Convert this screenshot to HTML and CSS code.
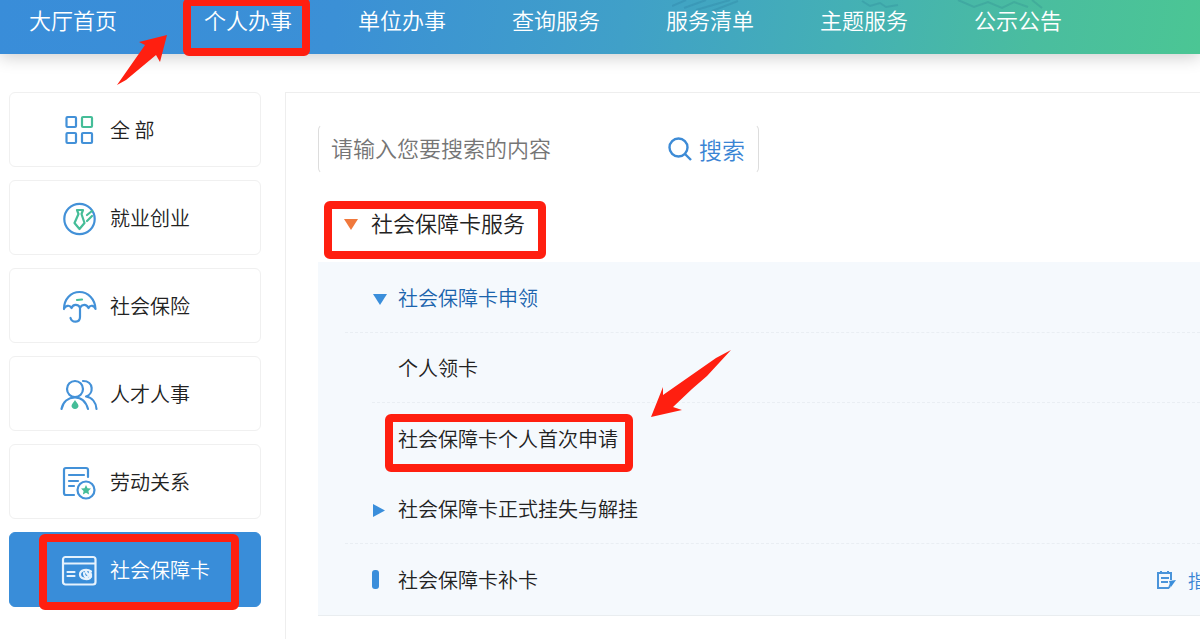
FILE: index.html
```
<!DOCTYPE html>
<html lang="zh-CN">
<head>
  <meta charset="UTF-8">
  <meta name="viewport" content="width=device-width, initial-scale=1.0">
  <title>个人办事 - 社会保障卡</title>
  <link rel="stylesheet" href="styles.css">
</head>
<body>
  <header class="header">
    <svg class="header-art" width="380" height="12" viewBox="0 0 380 12" aria-hidden="true">
      <path d="M0 6l14-6M12 8L34 0M24 10L58 0M40 11L66 1M190 1l8 5 10-3 6 4 12-2M286 0l16 7 14-5 14 6 12-6 14 5M360 0l10 8"/>
    </svg>
    <ul class="nav">
      <li class="home"><a href="#">大厅首页</a></li>
      <li class="current">
        <a href="#">个人办事</a>
        <span class="mark mark-nav"></span>
        <svg class="arrow arrow-nav" width="52" height="52" viewBox="0 0 52 52" aria-hidden="true">
          <path d="M51 1 23 8l6 3-7 10L1 51l9-5 18-15 12-10 4 7z"/>
        </svg>
      </li>
      <li><a href="#">单位办事</a></li>
      <li><a href="#">查询服务</a></li>
      <li><a href="#">服务清单</a></li>
      <li><a href="#">主题服务</a></li>
      <li><a href="#">公示公告</a></li>
    </ul>
  </header>

  <div class="page">
    <nav class="sidebar">
      <a class="card" href="#">
        <svg class="icon" viewBox="0 0 38 38">
          <rect x="6.5" y="6" width="9.5" height="10" rx="1"/>
          <rect class="green" x="22" y="6" width="10" height="10" rx="1"/>
          <rect x="6.5" y="22" width="9.5" height="10" rx="1"/>
          <rect x="22" y="22" width="10" height="10" rx="1"/>
        </svg>
        全 部
      </a>
      <a class="card" href="#">
        <svg class="icon" viewBox="0 0 38 38">
          <circle cx="19.5" cy="20" r="15.2"/>
          <path class="green" d="M17 11h6l-1.5 4 3 9-5 6-5-6 4-9zM27 16l5-4M27 22l5-5"/>
        </svg>
        就业创业
      </a>
      <a class="card" href="#">
        <svg class="icon" viewBox="0 0 38 38">
          <path d="M4 22C4 12 11 5 19.5 5S35 12 35.5 22c-1-3-5-5-7-1-2-4-6-4-8.5-.5-2-3.500-7-3.500-8.500.5-2-4-6.500-2-7.500 1z"/>
          <path d="M20 20v10c0 6-8 6-9.500 1"/>
          <path class="green" d="M17 13l5-.5"/>
        </svg>
        社会保险
      </a>
      <a class="card" href="#">
        <svg class="icon" viewBox="0 0 38 38">
          <circle cx="15" cy="14" r="8"/>
          <path d="M1.5 34C3 27 8 22.5 15 22.5S26 27 28 34M23 6c11 0 11 13 3 15.5 6 1 10 6 10.500 12.500"/>
          <path class="green-fill" d="M15 25c1 2 3.500 4 3.500 6 0 1.500-1.500 3-3.500 3s-3.500-1.500-3.500-3c0-2 2.500-4 3.500-6z"/>
        </svg>
        人才人事
      </a>
      <a class="card" href="#">
        <svg class="icon" viewBox="0 0 38 38">
          <path d="M28 14V7a2 2 0 0 0-2-2H6a2 2 0 0 0-2 2v23a2 2 0 0 0 2 2h8M9 12h15M9 18h9M9 23h5"/>
          <circle cx="26" cy="27" r="8.5"/>
          <path class="green-fill" d="M26 22l1.500 3.200 3.500.4-2.600 2.300.7 3.600-3.100-1.800-3.100 1.800.7-3.600-2.600-2.300 3.500-.4z"/>
        </svg>
        劳动关系
      </a>
      <a class="card active" href="#">
        <svg class="icon" viewBox="0 0 38 38">
          <rect x="3" y="6" width="32.5" height="27.5" rx="2.5"/>
          <path d="M3 12.5h32M7.500 21h7M7.500 25h7"/>
          <path d="M30 27c-3 2-10 1-10-3.500s7-6 11-3M24 22c0 3 1 4 3 4M26 21l3 4 1-4M31 23v3"/>
        </svg>
        社会保障卡
        <span class="mark mark-card"></span>
      </a>
    </nav>

    <main class="content">
      <form class="search">
        <input type="text" aria-label="搜索内容" placeholder="请输入您要搜索的内容">
        <button type="button">
          <svg class="search-icon" viewBox="0 0 24 24"><circle cx="10.5" cy="10.5" r="9"/><path d="M17 17l6 6"/></svg>
          搜索
        </button>
      </form>

      <h2 class="group">
        <button type="button"><i class="tri down orange"></i>社会保障卡服务</button>
        <span class="mark mark-group"></span>
      </h2>

      <ul class="list">
        <li>
          <div class="row open">
            <button type="button"><i class="tri down"></i>社会保障卡申领</button>
          </div>
          <ul class="sublist">
            <li><a href="#">个人领卡</a></li>
            <li>
              <a href="#">社会保障卡个人首次申请</a>
              <span class="mark mark-apply"></span>
              <svg class="arrow arrow-apply" width="82" height="70" viewBox="0 0 82 70" aria-hidden="true">
                <path d="M81 1 66 9 13 46l0-8L1 68l31-7-9-3 19-18 15-13z"/>
              </svg>
            </li>
          </ul>
        </li>
        <li>
          <div class="row">
            <button type="button"><i class="tri right"></i>社会保障卡正式挂失与解挂</button>
          </div>
        </li>
        <li>
          <div class="row last">
            <a href="#"><i class="bar"></i>社会保障卡补卡</a>
            <a class="guide" href="#">
              <svg class="guide-icon" viewBox="0 0 22 20">
                <path d="M15 10V3H2v15h11M5 1v3M12 1v3M5 8h8M5 12h7M13 18l2-5"/>
                <path class="pen" d="M13 11l7-1-5 7z"/>
              </svg>
              指
            </a>
          </div>
        </li>
      </ul>
    </main>
  </div>
</body>
</html>
```
FILE: styles.css
```
* {
  box-sizing: border-box;
}
body {
  margin: 0;
  font-family: "Noto Sans CJK SC", sans-serif;
  font-weight: 350;
  font-size: 20px;
  color: #222;
  background: #fff;
  overflow: hidden;
}
ul {
  list-style: none;
  margin: 0;
  padding: 0;
}
a {
  color: inherit;
  text-decoration: none;
}
button {
  display: flex;
  align-items: center;
  padding: 0;
  border: none;
  background: none;
  font: inherit;
  color: inherit;
  cursor: pointer;
}

/* top navigation */
.header {
  position: relative;
  height: 54px;
  background: linear-gradient(100deg, #398dd9 0%, #3b90d6 28%, #40a0c8 52%, #44b0b5 70%, #4abd9f 86%, #4bc694 100%);
  box-shadow: 0 3px 16px rgba(0, 0, 0, 0.2);
}
.header-art {
  position: absolute;
  top: 0;
  left: 56%;
  fill: none;
  stroke: rgba(20, 90, 130, 0.15);
  stroke-width: 2;
}
.nav {
  display: flex;
  gap: 66px;
  padding-left: 29px;
  font-size: 22px;
  line-height: 38px;
  color: #fff;
  white-space: nowrap;
}
.nav .home {
  margin-right: 21px;
}
.nav .current {
  position: relative;
}

/* red marks */
.mark {
  position: absolute;
  border: 8px solid #ff1f10;
  border-radius: 6px;
  pointer-events: none;
}
.mark-nav {
  left: -21px;
  top: -2px;
  width: 127px;
  height: 58px;
}
.mark-card {
  left: 29px;
  top: 1px;
  width: 200px;
  height: 76px;
}
.mark-group {
  left: 6px;
  top: 15px;
  width: 222px;
  height: 58px;
}
.mark-apply {
  left: 13px;
  top: 11px;
  width: 248px;
  height: 58px;
}
.arrow {
  position: absolute;
  fill: #ff1f10;
}
.arrow-nav {
  left: -88px;
  top: 34px;
}
.arrow-apply {
  left: 278px;
  top: -54px;
}

/* layout */
.page {
  display: flex;
  gap: 24px;
  padding: 38px 0 0 9px;
}
.sidebar {
  display: flex;
  flex-direction: column;
  flex: none;
  gap: 13px;
  width: 252px;
}
.card {
  position: relative;
  display: flex;
  align-items: center;
  gap: 12px;
  height: 75px;
  padding-left: 50px;
  border: 1px solid #f0f0f0;
  border-radius: 6px;
}
.card.active {
  background: #398dd9;
  border-color: #398dd9;
  color: #fff;
}
.icon {
  width: 38px;
  height: 38px;
  fill: none;
  stroke: #4391d8;
  stroke-width: 2.2;
  stroke-linecap: round;
  stroke-linejoin: round;
}
.icon .green {
  stroke: #45bd98;
}
.icon .green-fill {
  fill: #45bd98;
  stroke: none;
}
.active .icon {
  stroke: #e6f2fd;
}
.content {
  flex: 1;
  min-width: 0;
  min-height: calc(100vh - 92px);
  padding: 31px 0 24px 32px;
  border-top: 1px solid #eee;
  border-left: 1px solid #eee;
}

/* search */
.search {
  display: flex;
  align-items: center;
  width: 441px;
  height: 50px;
  border: 1px solid #ddd;
  border-top-color: transparent;
  border-bottom-color: transparent;
  border-radius: 6px;
}
.search input {
  flex: 1;
  min-width: 0;
  height: 100%;
  padding: 0 12px 4px;
  border: none;
  outline: none;
  background: none;
  font: inherit;
  font-size: 22px;
}
.search input::placeholder {
  color: #757575;
}
.search button {
  gap: 7px;
  padding-right: 13px;
  font-size: 23px;
  color: #3a84d4;
}
.search-icon {
  width: 24px;
  height: 24px;
  fill: none;
  stroke: #3d8bd6;
  stroke-width: 2.4;
}

/* service list */
.group {
  position: relative;
  display: flex;
  align-items: center;
  height: 76px;
  margin: 12px 0 0;
  padding: 0 0 4px 26px;
  font-size: 22px;
  font-weight: inherit;
}
.tri,
.bar {
  flex: none;
  background: #3a8edb;
}
.tri {
  margin-top: 5px;
}
.tri.down {
  width: 14px;
  height: 11px;
  margin-right: 11px;
  clip-path: polygon(0 0, 100% 0, 50% 100%);
}
.tri.right {
  width: 12px;
  height: 13px;
  margin-right: 13px;
  clip-path: polygon(0 0, 100% 50%, 0 100%);
}
.tri.orange {
  margin-right: 13px;
  background: #f0783c;
}
.bar {
  width: 7px;
  height: 19px;
  margin-right: 19px;
  border-radius: 3px;
}
.list {
  background: #f5f9fd;
  border-bottom: 1px solid #e9edf0;
}
.row {
  display: flex;
  align-items: center;
  justify-content: space-between;
  height: 71px;
  margin-left: 27px;
  padding-left: 28px;
  border-bottom: 1px dashed #e9eef3;
}
.row.last {
  padding-left: 27px;
  border-bottom: none;
}
.row a {
  display: flex;
  align-items: center;
}
.row.open {
  color: #1b64ad;
}
.sublist li {
  position: relative;
  display: flex;
  align-items: center;
  height: 70px;
  margin-left: 54px;
  padding-left: 26px;
}
.sublist li:first-child {
  border-bottom: 1px dashed #e9eef3;
}
.row .guide {
  gap: 10px;
  margin-right: -6px;
  font-size: 18px;
  color: #3a84d4;
}
.guide-icon {
  width: 22px;
  height: 20px;
  fill: none;
  stroke: #4a94da;
  stroke-width: 2;
}
.guide-icon .pen {
  fill: #3a8edb;
  stroke: none;
}
```
